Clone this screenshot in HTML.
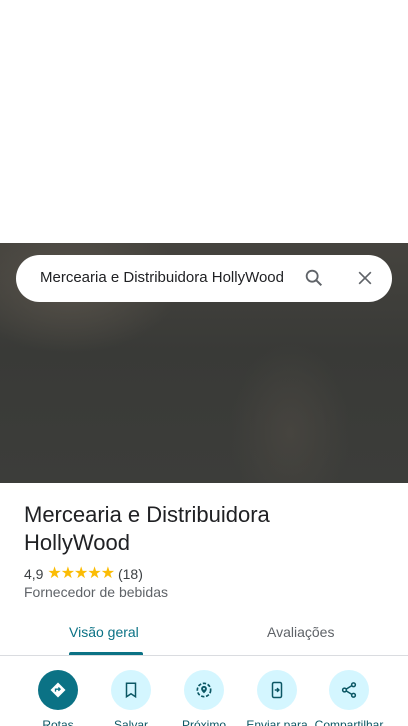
<!DOCTYPE html>
<html><head><meta charset="utf-8"><style>
*{margin:0;padding:0;box-sizing:border-box}
html,body{width:408px;height:726px;overflow:hidden}
body{background:#fff;font-family:"Liberation Sans",Roboto,Arial,sans-serif;position:relative}
.img{position:absolute;left:0;top:243px;width:408px;height:240px;background:radial-gradient(ellipse 110px 70px at 70px 40px,#57524a,transparent),radial-gradient(ellipse 60px 90px at 290px 190px,#46443f,transparent),linear-gradient(180deg,#45433e,#393a37 45%,#3c3d3a);}
.search{position:absolute;left:16px;top:255px;width:376px;height:47px;background:#fff;border-radius:24px;}
.search .t{position:absolute;left:24px;top:14px;font-size:15px;color:#202124;white-space:nowrap;width:247px;overflow:hidden}
.abs{position:absolute}
h1{position:absolute;left:24px;top:501px;font-size:22px;font-weight:400;line-height:28px;color:#202124}
.rat{position:absolute;left:24px;top:564px;font-size:14px;color:#3c4043}
.rat .s{color:#fbbc04;font-size:16px;letter-spacing:-1px;position:relative;top:-1px}
.cat{position:absolute;left:24px;top:584px;font-size:14px;color:#5f6368}
.tab{position:absolute;top:624px;font-size:14px}
.btn{position:absolute;top:670px;width:40px;height:40px;border-radius:50%;background:#d4f6ff;display:flex;align-items:center;justify-content:center}
.lbl{position:absolute;top:718px;font-size:12px;line-height:14px;color:#0b5764;white-space:nowrap;transform:translateX(-50%)}
</style></head><body>
<div class="img"></div>
<div class="search"><div class="t">Mercearia e Distribuidora HollyWood</div>
<svg class="abs" style="left:287px;top:12px" width="22" height="22" viewBox="0 0 24 24"><circle cx="10" cy="10" r="6" fill="none" stroke="#5f6368" stroke-width="2"/><path d="M14.5 14.5L20 20" stroke="#5f6368" stroke-width="2.2"/></svg>
<svg class="abs" style="left:339px;top:13px" width="20" height="20" viewBox="0 0 24 24"><path d="M5 5L19 19M19 5L5 19" stroke="#5f6368" stroke-width="2"/></svg>
</div>
<h1>Mercearia e Distribuidora<br>HollyWood</h1>
<div class="rat">4,9 <span class="s">★★★★★</span> (18)</div>
<div class="cat">Fornecedor de bebidas</div>
<div class="tab" style="left:69px;color:#0b7285;font-weight:500">Visão geral</div>
<div class="tab" style="left:267px;color:#5f6368">Avaliações</div>
<div class="abs" style="left:69px;top:652px;width:74px;height:3px;background:#0b7285;border-radius:2px 2px 0 0"></div>
<div class="abs" style="left:0;top:655px;width:408px;height:1px;background:#dadce0"></div>
<div class="btn" style="left:38px;background:#0b7285"><svg width="20" height="20" viewBox="0 0 24 24"><path d="M12 3L21 12L12 21L3 12Z" fill="#fff"/><path d="M9 14v-3h5M12.5 9l2 2-2 2" stroke="#0b7285" stroke-width="1.6" fill="none"/></svg></div>
<div class="btn" style="left:111px"><svg width="18" height="18" viewBox="0 0 24 24"><path d="M6 3h12v18l-6-4-6 4z" fill="none" stroke="#0b5764" stroke-width="2"/></svg></div>
<div class="btn" style="left:184px"><svg width="20" height="20" viewBox="0 0 24 24"><circle cx="12" cy="12" r="8" fill="none" stroke="#0b5764" stroke-width="2" stroke-dasharray="4 2"/><path d="M12 7a3.5 3.5 0 0 1 3.5 3.5C15.5 13 12 16 12 16S8.5 13 8.5 10.5A3.5 3.5 0 0 1 12 7z" fill="#0b5764"/><circle cx="12" cy="10.5" r="1.2" fill="#d4f6ff"/></svg></div>
<div class="btn" style="left:257px"><svg width="18" height="18" viewBox="0 0 24 24"><rect x="6" y="2" width="12" height="20" rx="2" fill="none" stroke="#0b5764" stroke-width="2"/><path d="M9 12h5M12 9.5l2.5 2.5-2.5 2.5" stroke="#0b5764" stroke-width="2" fill="none"/></svg></div>
<div class="btn" style="left:329px"><svg width="18" height="18" viewBox="0 0 24 24"><circle cx="18" cy="5" r="2.5" fill="none" stroke="#0b5764" stroke-width="2"/><circle cx="6" cy="12" r="2.5" fill="none" stroke="#0b5764" stroke-width="2"/><circle cx="18" cy="19" r="2.5" fill="none" stroke="#0b5764" stroke-width="2"/><path d="M8.2 10.8L15.8 6.2M8.2 13.2L15.8 17.8" stroke="#0b5764" stroke-width="2"/></svg></div>
<div class="lbl" style="left:58px">Rotas</div>
<div class="lbl" style="left:131px">Salvar</div>
<div class="lbl" style="left:204px">Próximo</div>
<div class="lbl" style="left:277px">Enviar para</div>
<div class="lbl" style="left:349px">Compartilhar</div>
</body></html>
